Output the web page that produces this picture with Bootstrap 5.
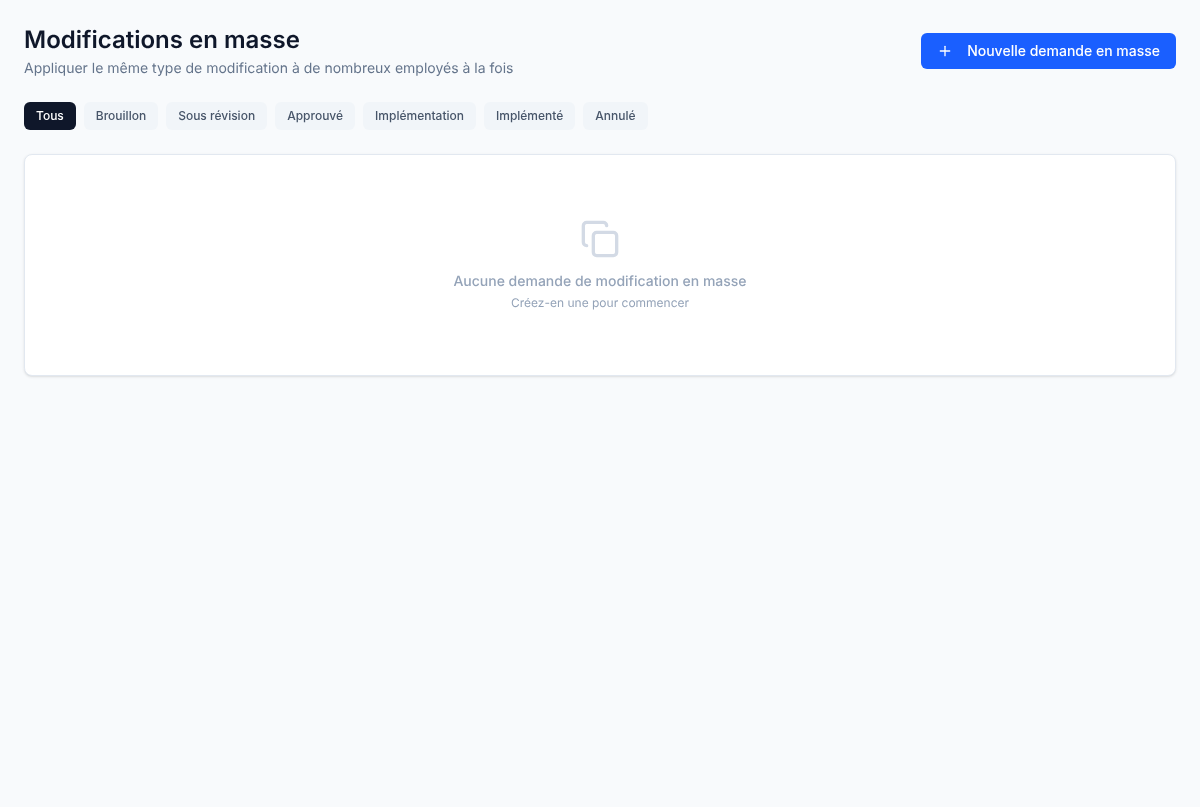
<!DOCTYPE html>
<html lang="fr"><head><meta charset="utf-8"><title>Modifications en masse</title>
<link rel="stylesheet" href="https://cdn.jsdelivr.net/npm/bootstrap@5.3.0/dist/css/bootstrap.min.css">
<style>
html,body{height:100%}
body{background:#f8fafc;font-family:Inter,"Liberation Sans",sans-serif;text-rendering:geometricPrecision;-webkit-font-smoothing:antialiased}
.page-wrap{padding:24px;will-change:transform}
.page-title{font-size:24px;line-height:32px;font-weight:600;color:#0f172a;margin:0 0 3px}
.page-sub{font-size:14px;line-height:19px;color:#64748b;margin:0}
.new-btn{background:#1a5fff;border:0;color:#fff;font-size:14px;font-weight:500;line-height:20px;padding:8px 16px;border-radius:6px;gap:14px}
.new-btn:hover{background:#1a5fff;color:#fff}
.new-btn svg{width:16px;height:16px}
.filter-row{margin-top:24px;margin-bottom:24px;gap:8px}
.filter-pill{background:#f1f5f9;color:#475569;border:0;font-size:12px;font-weight:500;line-height:16px;padding:6px 12px;border-radius:6px}
.filter-pill.on{background:#0f172a;color:#fff}
.empty-card{border:1px solid #e2e8f0;border-radius:8px;background:#fff;box-shadow:0 1px 3px rgba(0,0,0,.1),0 1px 2px -1px rgba(0,0,0,.1);padding:64px 24px}
.empty-card svg{width:40px;height:40px;color:#d3dae5;display:block;margin:0 auto 13px}
.empty-a{font-size:14px;line-height:20px;font-weight:500;color:#94a3b8;margin:0 0 3px}
.empty-b{font-size:12px;line-height:16px;color:#94a3b8;margin:0}
</style></head>
<body>
<main class="page-wrap">
<div class="d-flex justify-content-between align-items-center">
<div><h1 class="page-title">Modifications en masse</h1><p class="page-sub">Appliquer le même type de modification à de nombreux employés à la fois</p></div>
<button type="button" class="btn new-btn d-inline-flex align-items-center"><svg viewBox="0 0 24 24" fill="none" stroke="currentColor" stroke-width="2" stroke-linecap="round" stroke-linejoin="round"><path d="M5 12h14"/><path d="M12 5v14"/></svg><span>Nouvelle demande en masse</span></button>
</div>
<div class="d-flex filter-row">
<button type="button" class="btn filter-pill on">Tous</button>
<button type="button" class="btn filter-pill">Brouillon</button>
<button type="button" class="btn filter-pill">Sous révision</button>
<button type="button" class="btn filter-pill">Approuvé</button>
<button type="button" class="btn filter-pill">Implémentation</button>
<button type="button" class="btn filter-pill">Implémenté</button>
<button type="button" class="btn filter-pill">Annulé</button>
</div>
<div class="empty-card text-center">
<svg viewBox="0 0 24 24" fill="none" stroke="currentColor" stroke-width="2" stroke-linecap="round" stroke-linejoin="round"><rect x="8" y="8" width="14" height="14" rx="2" ry="2"/><path d="M4 16c-1.1 0-2-.9-2-2V4c0-1.1.9-2 2-2h10c1.1 0 2 .9 2 2"/></svg>
<p class="empty-a">Aucune demande de modification en masse</p>
<p class="empty-b">Créez-en une pour commencer</p>
</div>
</main>
<script src="https://cdn.jsdelivr.net/npm/bootstrap@5.3.0/dist/js/bootstrap.bundle.min.js"></script>
</body></html>
